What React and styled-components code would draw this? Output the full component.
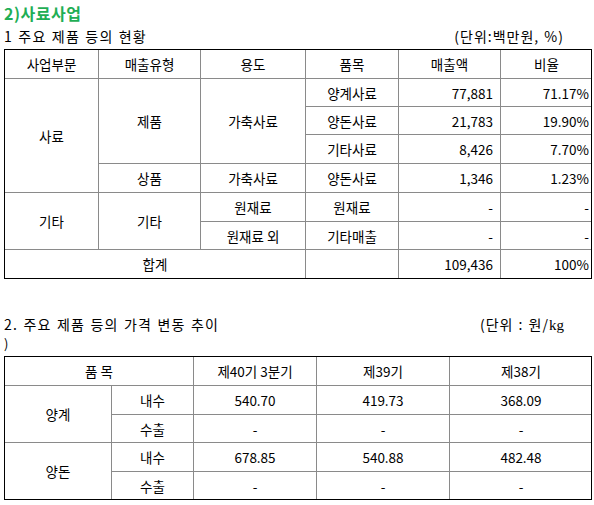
import React from 'react'
import styled, { createGlobalStyle } from 'styled-components'

const GlobalStyle = createGlobalStyle`
  html, body {
    margin: 0;
    padding: 0;
    background: #fff;
  }
  body {
    font-family: "Noto Sans CJK KR", "Noto Sans", sans-serif;
    color: #000;
  }
`

const Page = styled.div`
  width: 588px;
  padding: 4px 3px 0 4px;
`

const Title = styled.div`
  font-size: 16px;
  font-weight: bold;
  line-height: 18px;
  color: #1fae55;
  letter-spacing: 0.5px;
`

const Heading = styled.div`
  display: flex;
  justify-content: space-between;
  align-items: center;
  height: 20px;
  margin-top: ${(p) => p.top || 0}px;
  padding-right: 28px;
  font-size: 14px;
  letter-spacing: 1.2px;
  word-spacing: 1px;
`

const Unit = styled.span`
  font-size: 14px;
  letter-spacing: 1px;
  word-spacing: 1px;

  em {
    font-style: normal;
    font-family: "Liberation Serif", serif;
    font-size: 15px;
    letter-spacing: 0;
  }
`

const Paren = styled.div`
  height: 20px;
  line-height: 20px;
  font-size: 13px;
`

const Frame = styled.div`
  border: 1px solid #000;
  overflow: hidden;
  margin-top: ${(p) => p.top || 0}px;
`

const Table = styled.table`
  border-collapse: collapse;
  table-layout: fixed;
  margin: -1px;
  width: calc(100% + 2px);
  font-size: 13.5px;
`

const Row = styled.tr`
  height: ${(p) => p.h}px;
`

const Cell = styled.td`
  border: 1px solid #8a8a8a;
  padding: 0 ${(p) => p.pad || 0}px 0 0;
  text-align: ${(p) => p.align || 'center'};
  vertical-align: middle;
  white-space: nowrap;
  line-height: 18px;
`

const Num = (props) => <Cell align='right' pad={7} {...props} />
const Pct = (props) => <Cell align='right' pad={3} {...props} />

const SalesTable = () => (
  <Frame top={3}>
    <Table>
      <colgroup>
        <col style={{ width: 94 }} />
        <col style={{ width: 102 }} />
        <col style={{ width: 105 }} />
        <col style={{ width: 93 }} />
        <col style={{ width: 102 }} />
        <col style={{ width: 92 }} />
      </colgroup>
      <tbody>
        <Row h={29}>
          <Cell>사업부문</Cell>
          <Cell>매출유형</Cell>
          <Cell>용도</Cell>
          <Cell>품목</Cell>
          <Cell>매출액</Cell>
          <Cell>비율</Cell>
        </Row>
        <Row h={28}>
          <Cell rowSpan={4}>사료</Cell>
          <Cell rowSpan={3}>제품</Cell>
          <Cell rowSpan={3}>가축사료</Cell>
          <Cell>양계사료</Cell>
          <Num>77,881</Num>
          <Pct>71.17%</Pct>
        </Row>
        <Row h={28}>
          <Cell>양돈사료</Cell>
          <Num>21,783</Num>
          <Pct>19.90%</Pct>
        </Row>
        <Row h={29}>
          <Cell>기타사료</Cell>
          <Num>8,426</Num>
          <Pct>7.70%</Pct>
        </Row>
        <Row h={29}>
          <Cell>상품</Cell>
          <Cell>가축사료</Cell>
          <Cell>양돈사료</Cell>
          <Num>1,346</Num>
          <Pct>1.23%</Pct>
        </Row>
        <Row h={29}>
          <Cell rowSpan={2}>기타</Cell>
          <Cell rowSpan={2}>기타</Cell>
          <Cell>원재료</Cell>
          <Cell>원재료</Cell>
          <Num>-</Num>
          <Pct>-</Pct>
        </Row>
        <Row h={28}>
          <Cell>원재료 외</Cell>
          <Cell>기타매출</Cell>
          <Num>-</Num>
          <Pct>-</Pct>
        </Row>
        <Row h={29}>
          <Cell colSpan={3}>합계</Cell>
          <Cell />
          <Num>109,436</Num>
          <Pct>100%</Pct>
        </Row>
      </tbody>
    </Table>
  </Frame>
)

const prices = [
  { name: '양계', rows: [['내수', '540.70', '419.73', '368.09'], ['수출', '-', '-', '-']] },
  { name: '양돈', rows: [['내수', '678.85', '540.88', '482.48'], ['수출', '-', '-', '-']] }
]

const PriceTable = () => (
  <Frame top={2}>
    <Table>
      <colgroup>
        <col style={{ width: 107 }} />
        <col style={{ width: 82 }} />
        <col style={{ width: 123 }} />
        <col style={{ width: 133 }} />
        <col style={{ width: 143 }} />
      </colgroup>
      <tbody>
        <Row h={29}>
          <Cell colSpan={2}>품 목</Cell>
          <Cell>제40기 3분기</Cell>
          <Cell>제39기</Cell>
          <Cell>제38기</Cell>
        </Row>
        {prices.map((g) =>
          g.rows.map((r, i) => (
            <Row h={i === 0 ? 29 : 28} key={g.name + i}>
              {i === 0 && <Cell rowSpan={2}>{g.name}</Cell>}
              {r.map((v, j) => <Cell key={j}>{v}</Cell>)}
            </Row>
          ))
        )}
      </tbody>
    </Table>
  </Frame>
)

export default function App () {
  return (
    <Page>
      <GlobalStyle />
      <Title>2)사료사업</Title>
      <Heading top={4}>
        <span>1 주요 제품 등의 현황</span>
        <Unit>(단위:백만원, %)</Unit>
      </Heading>
      <SalesTable />
      <Heading top={35}>
        <span>2. 주요 제품 등의 가격 변동 추이</span>
        <Unit>(단위 : 원/<em>kg</em></Unit>
      </Heading>
      <Paren>)</Paren>
      <PriceTable />
    </Page>
  )
}
